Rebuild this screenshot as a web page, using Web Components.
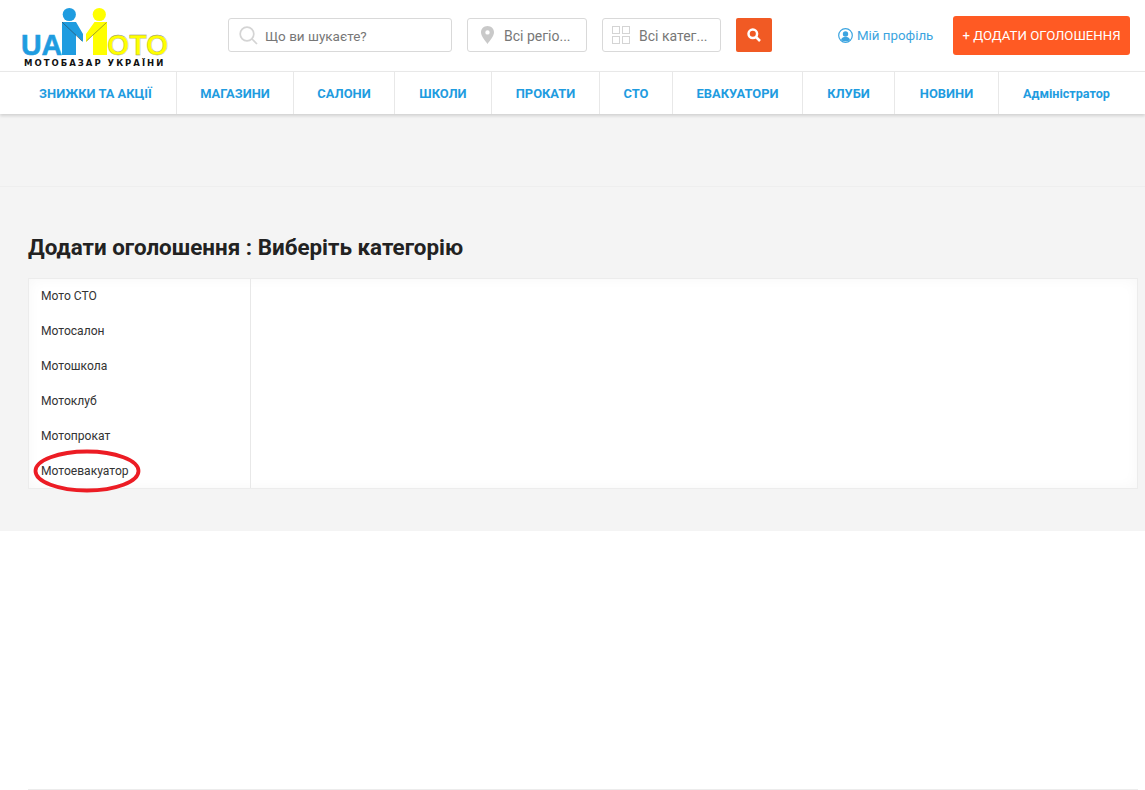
<!DOCTYPE html>
<html lang="uk">
<head>
<meta charset="utf-8">
<title>UAMoto</title>
<style>
    html, body { margin: 0; padding: 0; background: #fff; }
    body { font-family: Roboto, "Noto Sans", sans-serif; overflow: hidden; height: 790px; }
</style>
</head>
<body>
<site-header></site-header>
<main-nav>
    <nav-link first>ЗНИЖКИ ТА АКЦІЇ</nav-link>
    <nav-link>МАГАЗИНИ</nav-link>
    <nav-link>САЛОНИ</nav-link>
    <nav-link>ШКОЛИ</nav-link>
    <nav-link>ПРОКАТИ</nav-link>
    <nav-link>СТО</nav-link>
    <nav-link>ЕВАКУАТОРИ</nav-link>
    <nav-link>КЛУБИ</nav-link>
    <nav-link>НОВИНИ</nav-link>
    <nav-link last>Адміністратор</nav-link>
</main-nav>
<page-body>
    <category-item>Мото СТО</category-item>
    <category-item>Мотосалон</category-item>
    <category-item>Мотошкола</category-item>
    <category-item>Мотоклуб</category-item>
    <category-item>Мотопрокат</category-item>
    <category-item circled>Мотоевакуатор</category-item>
</page-body>
<site-footer></site-footer>

<script>
const headerTemplate = document.createElement("template");
headerTemplate.innerHTML = `
<style>
    :host { display: flex; height: 71px; align-items: flex-start; box-sizing: border-box; padding-right: 15px; }
    .logo { flex: none; width: 150px; height: 62px; margin: 8px 0 0 21px; overflow: visible; }
    .field {
        flex: none; box-sizing: border-box; height: 34px; margin-top: 18px;
        display: flex; align-items: center;
        border: 1px solid #d9d9d9; border-radius: 3px; background: #fff;
        color: #777; font-size: 14px; white-space: nowrap;
    }
    .field span { margin-top: 2px; }
    .search { width: 224px; margin-left: 57px; padding-left: 10px; gap: 7px; font-size: 13.500px; }
    .region { width: 120px; margin-left: 15px; padding-left: 13px; gap: 10px; }
    .cat { width: 119px; margin-left: 15px; padding-left: 9px; gap: 9px; }
    .go {
        flex: none; width: 36px; height: 34px; margin: 18px 0 0 15px; border-radius: 2px;
        background: #f15a24; display: flex; align-items: center; justify-content: center;
    }
    .profile {
        flex: none; margin: 18px 0 0 66px; height: 34px; display: flex; align-items: center; gap: 4px;
        color: #3ba4e0; font-size: 13.300px; white-space: nowrap;
    }
    .add {
        flex: none; box-sizing: border-box; width: 177px; height: 39px; margin: 16px 0 0 auto;
        display: flex; align-items: center; justify-content: center;
        background: #ff5a23; color: #fff; border-radius: 3px; font-size: 13.200px; white-space: nowrap;
    }
    svg { display: block; flex: none; }
</style>
<svg class="logo" viewBox="0 0 150 62">
    <text transform="translate(0 47) scale(.95 1)" font-family="'Liberation Sans', sans-serif" font-weight="700" font-size="30" fill="#1f9ce0" stroke="#1f9ce0" stroke-width=".6">UA</text>
    <g fill="#1f9ce0">
        <circle cx="48.300" cy="6.500" r="6.600"/>
        <path d="M41 14 H55 L62 26 V34 L55 27 V47 H41 Z"/>
    </g>
    <path d="M41 14 L61 33" stroke="#333" stroke-width=".5" fill="none"/>
    <text transform="translate(86 47) scale(.953 1)" font-family="'Liberation Sans', sans-serif" font-weight="700" font-size="30" fill="#ffff00" stroke="#888" stroke-width=".3">ОТО</text>
    <g fill="#ffff00">
        <circle cx="78.300" cy="6.500" r="6.600"/>
        <path d="M73.500 14 H86 V47 H72 V27 L65 34 V26 Z"/>
    </g>
    <path d="M85.500 14.500 L65.500 33" stroke="#444" stroke-width=".5" fill="none"/>
    <text x="3" y="58" font-family="'DejaVu Sans', sans-serif" font-weight="700" font-size="8.500" fill="#111" letter-spacing="2">МОТОБАЗАР УКРАЇНИ</text>
</svg>
<div class="field search">
    <svg width="19" height="19" viewBox="0 0 19 19" fill="none" stroke="#d4d4d4" stroke-width="1.700"><circle cx="8" cy="8" r="6.800"/><path d="M13 13 L18 18"/></svg>
    <span>Що ви шукаєте?</span>
</div>
<div class="field region">
    <svg width="13" height="18" viewBox="0 0 13 18"><path fill="#c9c9c9" fill-rule="evenodd" d="M6.500 0 C10.200 0 13 2.800 13 6.300 C13 10 9 14.500 6.500 18 C4 14.500 0 10 0 6.300 C0 2.800 2.800 0 6.500 0 Z M6.500 4.200 A2.200 2.200 0 1 0 6.500 8.600 A2.200 2.200 0 1 0 6.500 4.200 Z"/></svg>
    <span>Всі регіо...</span>
</div>
<div class="field cat">
    <svg width="18" height="18" viewBox="0 0 18 18" fill="none" stroke="#d4d4d4"><rect x=".5" y=".5" width="7" height="7"/><rect x="10.500" y=".5" width="7" height="7"/><rect x=".5" y="10.500" width="7" height="7"/><rect x="10.500" y="10.500" width="7" height="7"/></svg>
    <span>Всі катег...</span>
</div>
<div class="go">
    <svg width="14" height="14" viewBox="0 0 14 14" fill="none" stroke="#fff" stroke-width="2.500"><circle cx="5.800" cy="5.800" r="4.300"/><path d="M9 9 L13 13"/></svg>
</div>
<div class="profile">
    <svg width="15" height="15" viewBox="0 0 15 15"><circle cx="7.500" cy="7.500" r="6.800" fill="none" stroke="#3ba4e0" stroke-width="1.200"/><circle cx="7.500" cy="6" r="2.700" fill="#3ba4e0"/><path fill="#3ba4e0" d="M3 12 C3.500 9.500 5.500 9 7.500 9 C9.500 9 11.500 9.500 12 12 C10.500 13.800 4.500 13.800 3 12 Z"/></svg>
    <span>Мій профіль</span>
</div>
<div class="add">+ ДОДАТИ ОГОЛОШЕННЯ</div>
`;

class SiteHeader extends HTMLElement {
    constructor() {
        super();
        this.attachShadow({mode: "open"}).append(headerTemplate.content.cloneNode(true));
    }
}

const navTemplate = document.createElement("template");
navTemplate.innerHTML = `
<style>
    :host {
        display: flex; box-sizing: border-box; height: 43px;
        border-top: 1px solid #e8e8e8; background: #fff;
        box-shadow: 0 2px 3px rgba(0,0,0,.14);
        position: relative;
    }
</style>
<slot></slot>
`;

class MainNav extends HTMLElement {
    constructor() {
        super();
        this.attachShadow({mode: "open"}).append(navTemplate.content.cloneNode(true));
    }
}

const navLinkTemplate = document.createElement("template");
navLinkTemplate.innerHTML = `
<style>
    :host {
        display: flex; box-sizing: border-box; align-items: center; justify-content: center;
        flex: none; height: 100%; border-right: 1px solid #e8e8e8;
        color: #1f9ce0; font-size: 12.900px; font-weight: 700; white-space: nowrap;
    }
    :host([first]) { padding-left: 15px; }
    :host([last]) { border-right: 0; padding-right: 11px; font-size: 12.600px; }
</style>
<slot></slot>
`;

const navWidths = [177, 117, 101, 97, 108, 73, 130, 92, 104, 146];

class NavLink extends HTMLElement {
    constructor() {
        super();
        this.attachShadow({mode: "open"}).append(navLinkTemplate.content.cloneNode(true));
    }
    connectedCallback() {
        const i = [...this.parentNode.children].indexOf(this);
        this.style.width = navWidths[i] + "px";
    }
}

const bodyTemplate = document.createElement("template");
bodyTemplate.innerHTML = `
<style>
    :host { display: block; background: #f4f4f4; height: 417px; }
    .band { height: 72px; border-bottom: 1px solid #eeeeee; }
    h1 {
        margin: 0; padding: 47px 0 0 28px; height: 44px;
        font-size: 22.400px; line-height: 26px; font-weight: 700; color: #222;
    }
    .panel {
        display: flex; box-sizing: border-box; height: 211px; margin: 0 7px 0 28px;
        border: 1px solid #ececec; background: #fff;
        box-shadow: inset 0 0 14px rgba(0,0,0,.035);
    }
    .list { flex: none; box-sizing: border-box; width: 222px; border-right: 1px solid #e8e8e8; }
    .rest { flex: 1; }
</style>
<div class="band"></div>
<h1>Додати оголошення : Виберіть категорію</h1>
<div class="panel">
    <div class="list"><slot></slot></div>
    <div class="rest"></div>
</div>
`;

class PageBody extends HTMLElement {
    constructor() {
        super();
        this.attachShadow({mode: "open"}).append(bodyTemplate.content.cloneNode(true));
    }
}

const itemTemplate = document.createElement("template");
itemTemplate.innerHTML = `
<style>
    :host {
        display: block; position: relative; height: 35px; padding-left: 12px;
        font-size: 12.100px; line-height: 34px; color: #333; white-space: nowrap;
    }
    svg { display: none; position: absolute; left: 4px; top: -5px; }
    :host([circled]) svg { display: block; }
</style>
<slot></slot>
<svg width="108" height="44" viewBox="0 0 108 44"><ellipse cx="54" cy="22" rx="51.500" ry="19.500" fill="none" stroke="#ec1c24" stroke-width="3.800"/></svg>
`;

class CategoryItem extends HTMLElement {
    constructor() {
        super();
        this.attachShadow({mode: "open"}).append(itemTemplate.content.cloneNode(true));
    }
}

const footerTemplate = document.createElement("template");
footerTemplate.innerHTML = `
<style>
    :host { display: block; height: 259px; box-sizing: border-box; padding: 258px 7px 0 28px; }
    div { height: 1px; background: #ececec; }
</style>
<div></div>
`;

class SiteFooter extends HTMLElement {
    constructor() {
        super();
        this.attachShadow({mode: "open"}).append(footerTemplate.content.cloneNode(true));
    }
}

customElements.define("site-header", SiteHeader);
customElements.define("main-nav", MainNav);
customElements.define("nav-link", NavLink);
customElements.define("page-body", PageBody);
customElements.define("category-item", CategoryItem);
customElements.define("site-footer", SiteFooter);
</script>
</body>
</html>
